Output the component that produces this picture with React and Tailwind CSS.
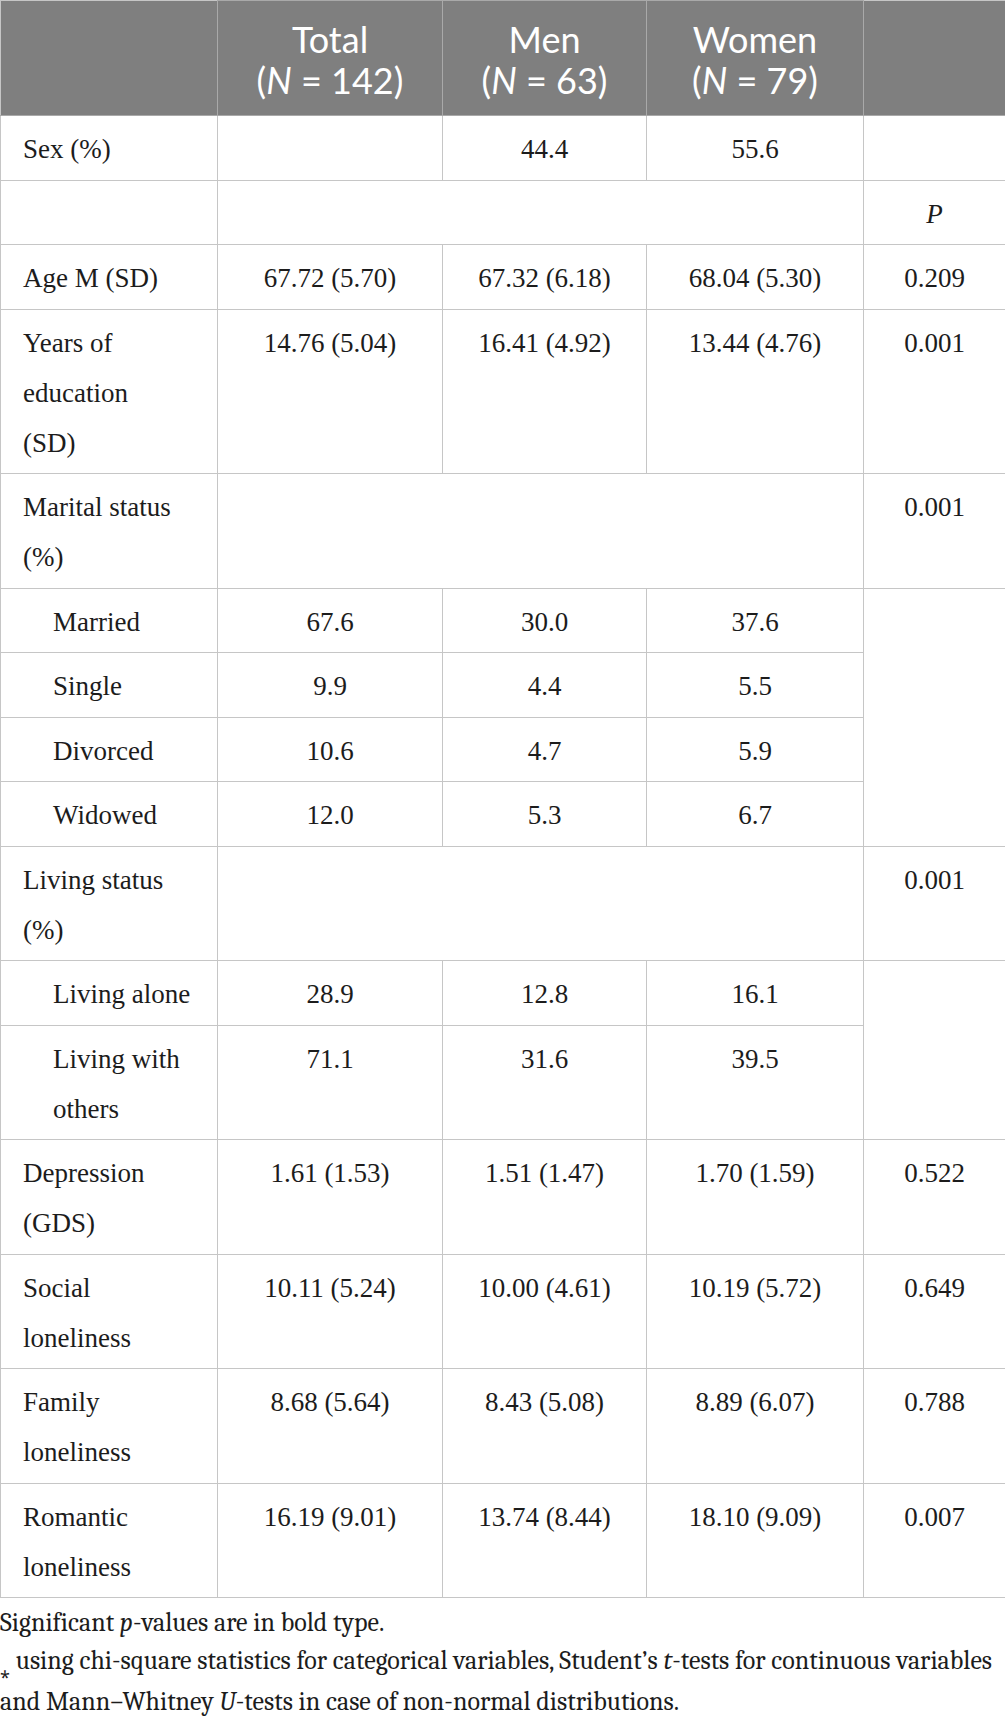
const rows = [
  { label: ["Sex (%)"], cells: ["", "44.4", "55.6"], p: "" },
  { kind: "pHead" },
  { label: ["Age M (SD)"], cells: ["67.72 (5.70)", "67.32 (6.18)", "68.04 (5.30)"], p: "0.209" },
  { label: ["Years of", "education", "(SD)"], cells: ["14.76 (5.04)", "16.41 (4.92)", "13.44 (4.76)"], p: "0.001" },
  { kind: "group", label: ["Marital status", "(%)"], p: "0.001" },
  { sub: true, label: ["Married"], cells: ["67.6", "30.0", "37.6"], span: 4 },
  { sub: true, label: ["Single"], cells: ["9.9", "4.4", "5.5"] },
  { sub: true, label: ["Divorced"], cells: ["10.6", "4.7", "5.9"] },
  { sub: true, label: ["Widowed"], cells: ["12.0", "5.3", "6.7"] },
  { kind: "group", label: ["Living status", "(%)"], p: "0.001" },
  { sub: true, label: ["Living alone"], cells: ["28.9", "12.8", "16.1"], span: 2 },
  { sub: true, label: ["Living with", "others"], cells: ["71.1", "31.6", "39.5"] },
  { label: ["Depression", "(GDS)"], cells: ["1.61 (1.53)", "1.51 (1.47)", "1.70 (1.59)"], p: "0.522" },
  { label: ["Social", "loneliness"], cells: ["10.11 (5.24)", "10.00 (4.61)", "10.19 (5.72)"], p: "0.649" },
  { label: ["Family", "loneliness"], cells: ["8.68 (5.64)", "8.43 (5.08)", "8.89 (6.07)"], p: "0.788" },
  { label: ["Romantic", "loneliness"], cells: ["16.19 (9.01)", "13.74 (8.44)", "18.10 (9.09)"], p: "0.007" },
];

const td = "border border-[#c6c6c6] pt-[8px] pb-[5.5px] align-top";

function Label({ lines, sub }) {
  return (
    <td className={`${td} text-left ${sub ? "pl-[52px]" : "pl-[22px]"} pr-2`}>
      {lines.map((l, i) => (
        <div key={i}>{l}</div>
      ))}
    </td>
  );
}

function HeadCell({ title, n }) {
  return (
    <th className="border border-[#a9a9a9] pt-[18px] pb-[14px] font-normal text-center align-top">
      <div>{title}</div>
      <div>
        (<i>N</i> = {n})
      </div>
    </th>
  );
}

export default function App() {
  return (
    <div className="w-[1005px] bg-white text-[#1c1c1c] font-[Liberation_Serif,serif]">
      <table className="w-[1005px] table-fixed border-collapse font-[Liberation_Serif,serif] text-[27px] leading-[50px]">
        <colgroup>
          <col className="w-[217px]" />
          <col className="w-[225px]" />
          <col className="w-[204px]" />
          <col className="w-[217px]" />
          <col className="w-[142px]" />
        </colgroup>
        <thead>
          <tr className="bg-[#7f7f7f] text-white font-[Lato,sans-serif] text-[36px] leading-[41px]">
            <th className="border border-[#a9a9a9] border-l-[#c6c6c6] border-t-[#c6c6c6]"></th>
            <HeadCell title="Total" n="142" />
            <HeadCell title="Men" n="63" />
            <HeadCell title="Women" n="79" />
            <th className="border border-[#a9a9a9] border-r-[#c6c6c6] border-t-[#c6c6c6]"></th>
          </tr>
        </thead>
        <tbody>
          {rows.map((r, i) => {
            if (r.kind === "pHead") {
              return (
                <tr key={i}>
                  <td className={td}></td>
                  <td className={td} colSpan={3}></td>
                  <td className={`${td} text-center`}>
                    <i>P</i>
                  </td>
                </tr>
              );
            }
            if (r.kind === "group") {
              return (
                <tr key={i}>
                  <Label lines={r.label} />
                  <td className={td} colSpan={3}></td>
                  <td className={`${td} text-center`}>{r.p}</td>
                </tr>
              );
            }
            return (
              <tr key={i}>
                <Label lines={r.label} sub={r.sub} />
                {r.cells.map((c, j) => (
                  <td key={j} className={`${td} text-center`}>
                    {c}
                  </td>
                ))}
                {r.sub ? (
                  r.span ? <td className={td} rowSpan={r.span}></td> : null
                ) : (
                  <td className={`${td} text-center`}>{r.p}</td>
                )}
              </tr>
            );
          })}
        </tbody>
      </table>
      <div className="mt-[6px] font-serif text-[26px] leading-[38px] whitespace-nowrap">
        <div>
          Significant <i>p</i>-values are in bold type.
        </div>
        <div>
          <span className="relative top-[6px] text-[18px]">⁎</span> using chi-square statistics for
          categorical variables, Student’s <i>t</i>-tests for continuous variables
        </div>
        <div>
          and Mann–Whitney <i>U</i>-tests in case of non-normal distributions.
        </div>
      </div>
    </div>
  );
}
